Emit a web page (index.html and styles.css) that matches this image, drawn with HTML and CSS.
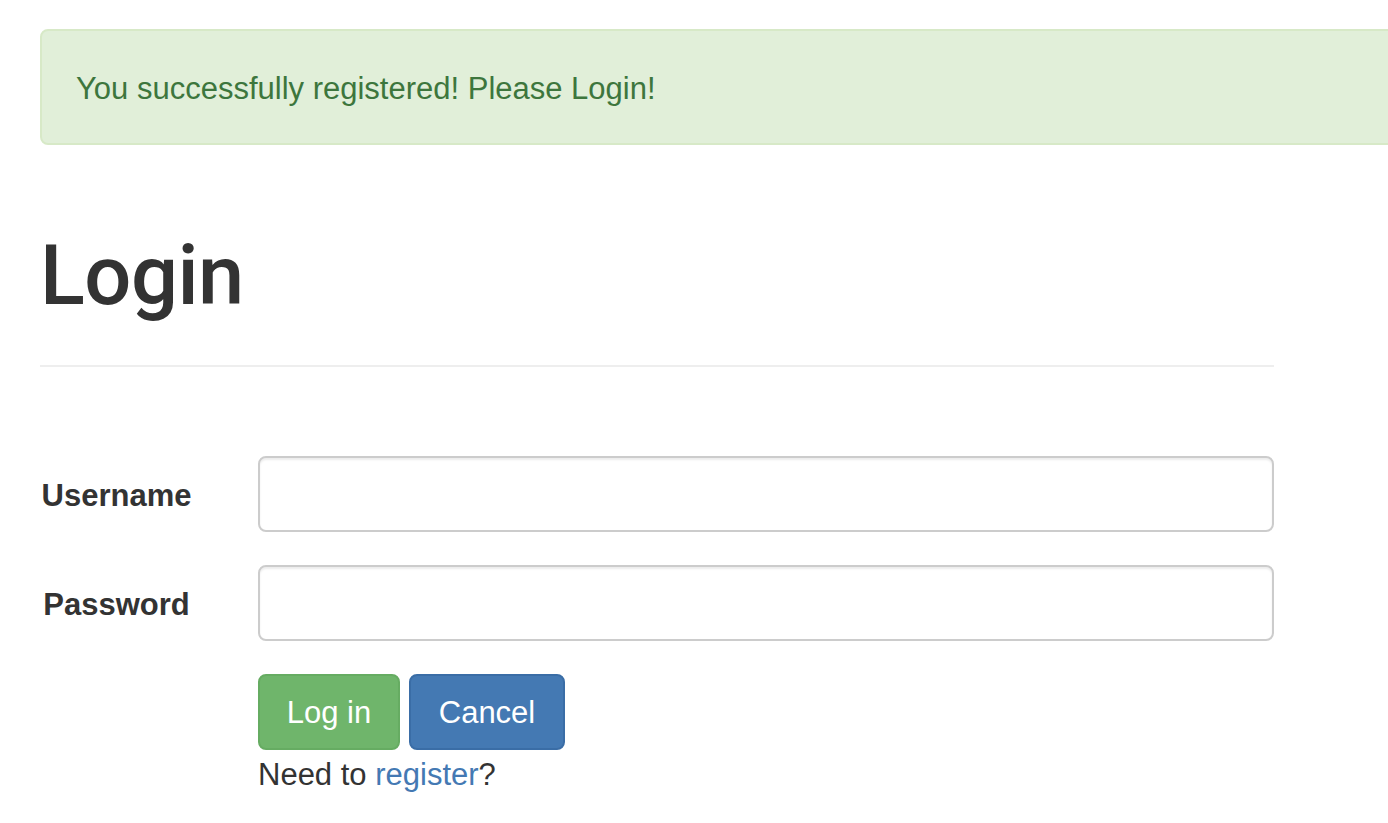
FILE: index.html
```html
<!DOCTYPE html>
<html lang="en">
<head>
<meta charset="utf-8">
<title>Login</title>
<link rel="stylesheet" href="styles.css">
</head>
<body>
<div class="page">
  <div class="alert">You successfully registered! Please Login!</div>
  <div class="content">
    <h1 class="title">Login</h1>
    <hr class="rule">
    <form class="login-form">
      <label class="field-label" for="username">Username</label>
      <input class="field-input" id="username" type="text">
      <label class="field-label" for="password">Password</label>
      <input class="field-input" id="password" type="password">
      <div class="actions">
        <div class="buttons">
          <button type="button" class="btn btn-success">Log in</button>
          <button type="button" class="btn btn-primary">Cancel</button>
        </div>
        <p class="register">Need to <a href="#">register</a>?</p>
      </div>
    </form>
  </div>
</div>
</body>
</html>
```
FILE: styles.css
```css
html, body {
  margin: 0;
  padding: 0;
  background: #fff;
  overflow: hidden;
}
body {
  font-family: "Liberation Sans", Arial, Helvetica, sans-serif;
  color: #333;
}
.page {
  padding: 29px 0 0 40px;
}
.alert {
  box-sizing: border-box;
  height: 116px;
  margin-right: -40px;
  display: flex;
  align-items: center;
  padding: 4px 34px 0 34px;
  background: #e1efd9;
  border: 2px solid #d7e9c7;
  border-radius: 8px;
  color: #3d763d;
  font-size: 31px;
}
.content {
  width: 1234px;
}
.title {
  margin: 90px 0 0 0;
  font-family: Roboto, "Liberation Sans", sans-serif;
  font-weight: 500;
  font-size: 83px;
  line-height: 82px;
  color: #333;
  letter-spacing: -0.5px;
}
.rule {
  margin: 48px 0 0 0;
  border: 0;
  border-top: 2px solid #eee;
  height: 0;
}
.login-form {
  margin-top: 89px;
  display: grid;
  grid-template-columns: 153px 1016px;
  column-gap: 65px;
  row-gap: 33px;
  align-items: center;
}
.field-label {
  text-align: center;
  font-weight: bold;
  font-size: 31px;
  padding-top: 4px;
}
.field-input {
  box-sizing: border-box;
  height: 76px;
  width: 100%;
  margin: 0;
  border: 2px solid #ccc;
  border-radius: 8px;
  box-shadow: inset 0 2px 2px rgba(0, 0, 0, 0.075);
  background: #fff;
  font-size: 28px;
  padding: 0 24px;
}
.actions {
  grid-column: 2;
}
.buttons {
  display: flex;
  gap: 9px;
}
.btn {
  box-sizing: border-box;
  height: 76px;
  margin: 0;
  border-radius: 8px;
  border: 2px solid transparent;
  color: #fff;
  font-family: "Liberation Sans", Arial, sans-serif;
  font-size: 31px;
  padding: 2px 0 0 0;
}
.btn-success {
  background: #6fb56b;
  border-color: #66ac62;
  width: 142px;
}
.btn-primary {
  background: #4479b3;
  border-color: #3a6da6;
  width: 156px;
}
.register {
  margin: 7px 0 0 0;
  font-size: 31px;
  line-height: 36px;
}
.register a {
  color: #4479b3;
  text-decoration: none;
}
```
